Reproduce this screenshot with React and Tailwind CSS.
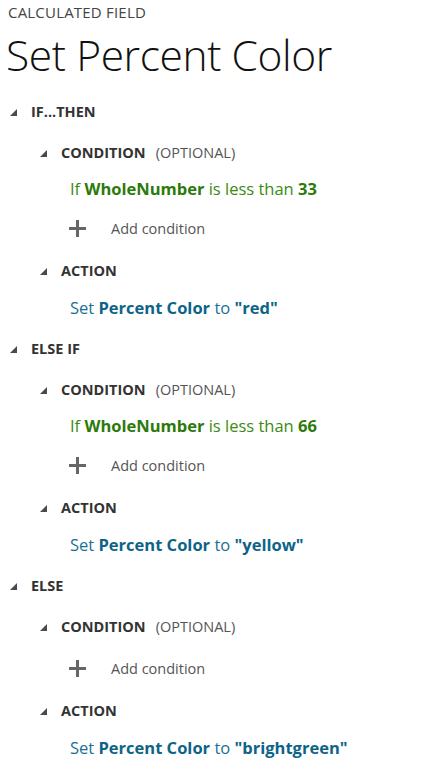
import React from 'react'

const Tri = () => (
    <svg width="7" height="7" viewBox="0 0 7 7" className="shrink-0">
        <polygon points="7,0 7,7 0,7" fill="#4a4a4a" />
    </svg>
)

const Section = ({ title }) => (
    <div className="h-[40px] flex items-center pt-[4px] pl-[10px]">
        <Tri />
        <span className="ml-[14px] text-[14.5px] font-bold text-[#333]">{title}</span>
    </div>
)

const Sub = ({ title, optional }) => (
    <div className="h-[42px] flex items-center pt-[4px] pl-[40px]">
        <Tri />
        <span className="ml-[14px] text-[14.5px] font-bold text-[#333]">{title}</span>
        {optional && <span className="ml-[10px] text-[14.5px] text-[#555]">(OPTIONAL)</span>}
    </div>
)

const Cond = ({ value }) => (
    <div className="h-[34px] flex items-center pl-[70px] text-[16.5px] text-[#3b8a12]">
        If&nbsp;<b className="text-[#2c7a0a]">WholeNumber</b>&nbsp;is less than&nbsp;<b className="text-[#2c7a0a]">{value}</b>
    </div>
)

const Add = () => (
    <div className="h-[42px] flex items-center pt-[3px] pl-[69px]">
        <svg width="17" height="17" viewBox="0 0 17 17">
            <path d="M8.5 0v17M0 8.5h17" stroke="#666" strokeWidth="3" />
        </svg>
        <span className="ml-[25px] text-[14.5px] text-[#555]">Add condition</span>
    </div>
)

const SetRow = ({ value }) => (
    <div className="h-[37px] flex items-center pl-[70px] text-[16.5px] text-[#1b7096]">
        Set&nbsp;<b className="text-[#0d6487]">Percent Color</b>&nbsp;to&nbsp;<b className="text-[#0d6487]">"{value}"</b>
    </div>
)

export default function App() {
    return (
        <div className="w-[439px] h-[784px] bg-white overflow-hidden font-['Open_Sans',sans-serif]">
            <div className="h-[24px] flex items-center pl-[8px] text-[15px] tracking-[0.2px] text-[#444]">CALCULATED FIELD</div>
            <div className="h-[66px] pt-[10px] pl-[6px] text-[42.5px] leading-none font-light text-[#111] tracking-[-0.4px]">Set Percent Color</div>

            <Section title="IF...THEN" />
            <Sub title="CONDITION" optional />
            <Cond value="33" />
            <Add />
            <Sub title="ACTION" />
            <SetRow value="red" />

            <Section title="ELSE IF" />
            <Sub title="CONDITION" optional />
            <Cond value="66" />
            <Add />
            <Sub title="ACTION" />
            <SetRow value="yellow" />

            <Section title="ELSE" />
            <Sub title="CONDITION" optional />
            <Add />
            <Sub title="ACTION" />
            <SetRow value="brightgreen" />
        </div>
    )
}
